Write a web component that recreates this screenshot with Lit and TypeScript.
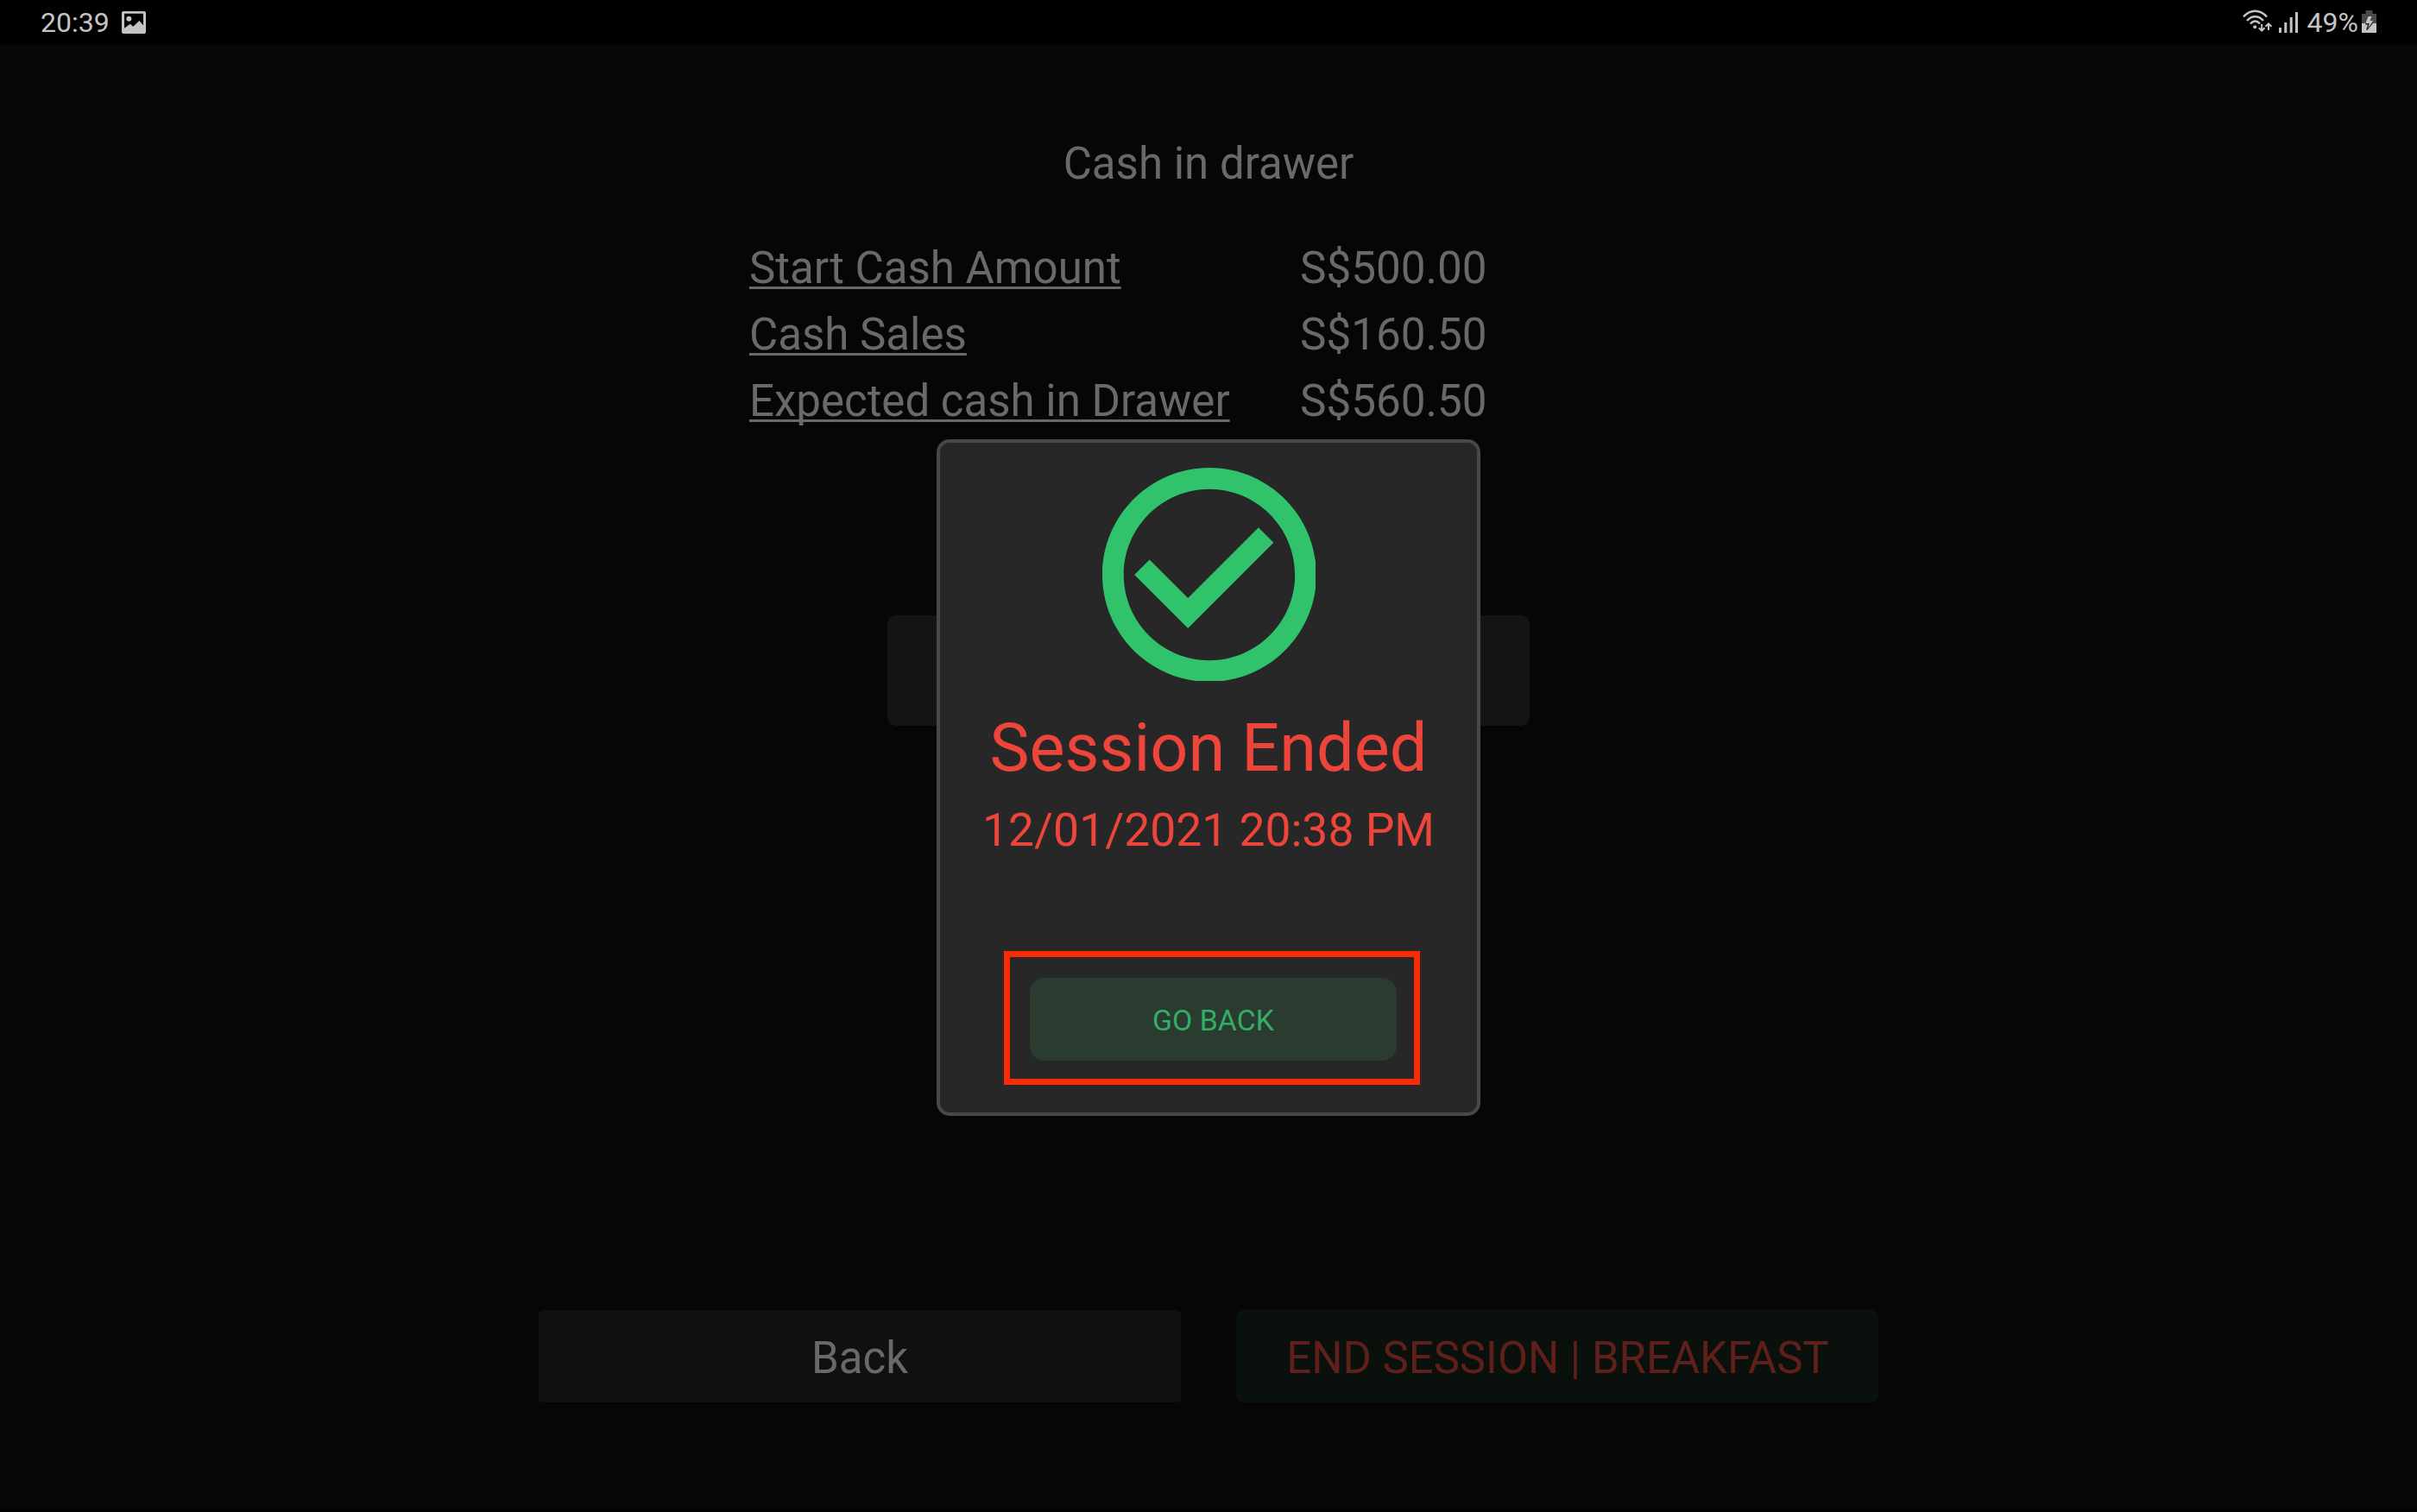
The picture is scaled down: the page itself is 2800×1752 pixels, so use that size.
import { LitElement, css, html } from "lit";
import { customElement } from "lit/decorators.js";

const rows = [
  { label: "Start Cash Amount", value: "S$500.00" },
  { label: "Cash Sales", value: "S$160.50" },
  { label: "Expected cash in Drawer", value: "S$560.50" },
];

@customElement("status-bar")
export class StatusBar extends LitElement {
  static styles = css`
    :host {
      display: flex;
      justify-content: space-between;
      align-items: flex-start;
      box-sizing: border-box;
      height: 51px;
      padding: 0 47px 0 47px;
      background: #000;
      color: #c4c4c4;
      font-size: 32px;
      line-height: 53px;
    }

    .side {
      display: flex;
    }

    svg {
      display: block;
      fill: currentColor;
    }

    .photo {
      margin: 13px 0 0 14px;
    }

    .wifi {
      margin-top: 11px;
    }

    .signal {
      margin: 13px 11px 0 8px;
    }

    .battery {
      margin: 12px 0 0 4px;
    }
  `;

  render() {
    return html`
      <div class="side">
        <span class="clock">20:39</span>
        <svg class="photo" width="28" height="26" viewBox="0 0 28 26">
          <path
            fill-rule="evenodd"
            d="M2 0h24a2 2 0 0 1 2 2v22a2 2 0 0 1-2 2H2a2 2 0 0 1-2-2V2a2 2 0 0 1 2-2zM3 2.700v17l6.700-5 3.600 3 7-6.700 4.700 5.300V2.700z"
          />
          <circle cx="8.400" cy="8.700" r="3" />
        </svg>
      </div>
      <div class="side">
        <svg class="wifi" width="34" height="28" viewBox="0 0 34 28">
          <g fill="none" stroke="currentColor" stroke-width="2.500">
            <path d="M1 8.500C9-.5 20-.5 28 8.500" />
            <path d="M5 13c5.500-6.300 13.500-6.300 19 0" />
            <path d="M9 16.500c3.500-4 7.500-4 11 0" />
            <path d="M22.200 17v7.500M18.800 21.200l3.400 3.400 3.400-3.400" stroke-width="2" />
            <path d="M30 24v-7.500M26.600 19.800l3.400-3.400 3.400 3.400" stroke-width="2" />
          </g>
          <circle cx="14.200" cy="20.200" r="2" />
        </svg>
        <svg class="signal" width="22" height="26" viewBox="0 0 22 26">
          <path d="M0 19h3v6H0zM6.300 13h3v12h-3zM12.700 7h3v18h-3zM19 1h3v24h-3z" />
        </svg>
        <span class="level">49%</span>
        <svg class="battery" width="17" height="26" viewBox="0 0 17 26">
          <path fill="#4a4a4a" d="M4.500 0h8v4H17v11H0V4h4.500z" />
          <path d="M0 15h17v11H0z" />
          <path d="M7.500 7h4L9.500 12H13l-2 3H4.500z" />
          <path fill="#161616" d="M4.500 15h4.300l-1.600 5.500L11.500 15H13L6.200 23l-.9-.7L7 16.500H4z" />
        </svg>
      </div>
    `;
  }
}

@customElement("session-dialog")
export class SessionDialog extends LitElement {
  static styles = css`
    :host {
      display: flex;
      flex-direction: column;
      align-items: center;
      box-sizing: border-box;
      width: 630px;
      height: 784px;
      padding-top: 29px;
      border: 4px solid #484848;
      border-radius: 15px;
      background: #272727;
      color: #ee453a;
      white-space: nowrap;
    }

    .check {
      display: block;
      width: 247px;
      height: 247px;
      fill: #30c36b;
    }

    .title {
      margin-top: 32px;
      font-size: 77.4px;
      line-height: 92px;
    }

    .date {
      margin-top: 17px;
      font-size: 53.4px;
      line-height: 64px;
    }

    .highlight {
      box-sizing: border-box;
      width: 482px;
      height: 155px;
      margin: 108px 0 0 7px;
      padding: 24px 23px;
      border: 7px solid #fb2c05;
    }

    .go-back {
      display: block;
      width: 425px;
      height: 96px;
      margin: 0;
      padding: 2px 0 0 1px;
      border: 0;
      border-radius: 17px;
      background: #2a3b30;
      color: #34ad66;
      font: 33.8px Roboto, sans-serif;
    }
  `;

  render() {
    return html`
      <svg class="check" viewBox="2 2 19.920 19.920">
        <path
          d="M12 2C6.480 2 2 6.480 2 12s4.480 10 10 10 10-4.480 10-10S17.520 2 12 2zm0 18c-4.410 0-8-3.590-8-8s3.590-8 8-8 8 3.590 8 8-3.590 8-8 8zm4.590-12.420L10 14.170l-3.590-3.580L5 12l5 5 8-8z"
        />
      </svg>
      <div class="title">Session Ended</div>
      <div class="date">12/01/2021 20:38 PM</div>
      <div class="highlight">
        <button class="go-back">GO BACK</button>
      </div>
    `;
  }
}

@customElement("app-root")
export class AppRoot extends LitElement {
  static styles = css`
    :host {
      display: block;
      position: relative;
      box-sizing: border-box;
      width: 2800px;
      height: 1752px;
      overflow: hidden;
      border-bottom: 1px solid #000;
      background: #060606;
      color: #696969;
      font-family: Roboto, sans-serif;
    }

    .page {
      display: flex;
      flex-direction: column;
      align-items: center;
      font-size: 51px;
      line-height: 60px;
      white-space: nowrap;
    }

    .heading {
      margin-top: 109px;
    }

    .totals {
      display: grid;
      grid-template-columns: 638px 226px;
      row-gap: 17px;
      width: 1064px;
      margin-top: 61px;
    }

    .label {
      text-decoration: underline;
      text-decoration-thickness: 3px;
      text-underline-offset: 4px;
      text-decoration-skip-ink: none;
    }

    .value {
      font-size: 51.2px;
    }

    .amount-field {
      width: 744px;
      height: 128px;
      margin-top: 218px;
      border-radius: 10px;
      background: #141414;
    }

    .actions {
      display: flex;
      gap: 64px;
      margin-top: 677px;
    }

    .action {
      width: 744px;
      height: 107px;
      margin: 0;
      padding: 5px 0 0;
      border: 0;
      border-radius: 5px;
      background: #101010;
      color: inherit;
      font: inherit;
    }

    .end {
      padding-left: 1px;
      border-radius: 8px;
      background: #0a110d;
      color: #5f1f1b;
      font-size: 50.9px;
    }

    /* the dialog floats over the dimmed page */
    .dialog {
      position: absolute;
      top: 509px;
      left: 1085px;
    }
  `;

  render() {
    return html`
      <status-bar></status-bar>
      <main class="page">
        <div class="heading">Cash in drawer</div>
        <div class="totals">
          ${rows.map(
            (row) => html`
              <div><span class="label">${row.label}</span></div>
              <div class="value">${row.value}</div>
            `
          )}
        </div>
        <div class="amount-field"></div>
        <div class="actions">
          <button class="action">Back</button>
          <button class="action end">END SESSION | BREAKFAST</button>
        </div>
      </main>
      <session-dialog class="dialog"></session-dialog>
    `;
  }
}
